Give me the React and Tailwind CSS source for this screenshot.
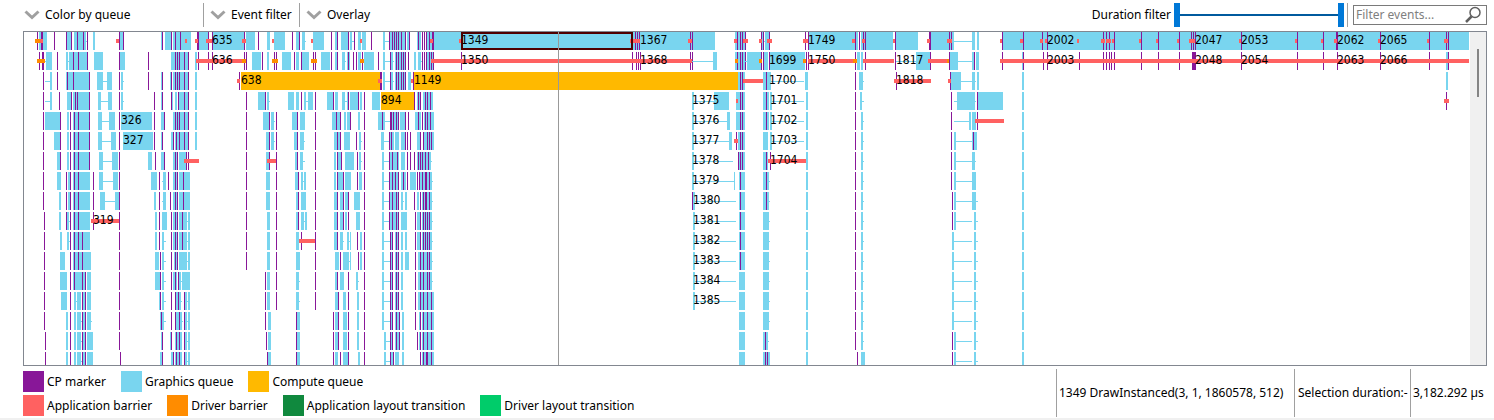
import React from "react";

/*
 * Each string is one lane of the timeline. Tokens, in pixels:
 *   b = graphics queue, c = compute queue, l = idle connector,
 *   p = CP marker, r = application barrier, o = driver barrier,
 *   t = label (x:text), s = selected event
 */
const ROWS = [
  "b39-47 p37 p41 p42 o35-40 r40-43 p54 b66-72 l67-69 p66 p71 b74-86 l86-88 p77 p83 p87 b93-95 b119-123 p119 p123 r116-119 b161-162 p162 b165-171 p171 b173-191 p175 p180 r185-187 p197 p198 b199-208 p208 r195-198 b213-244 p212 r206-212 b246-255 p244 r242-246 p258 b267-270 b274-285 r272-274 p292 b296-299 p299 b302-305 l305-306 b313-324 r311-313 p331 b335-337 p337 b341-348 p348 b350-352 l352-354 p354 b358-361 b362-366 r360-362 p371 b383-385 l385-389 b389-406 p389 p392 p394 p396 p398 p401 p405 b407-409 p409 b417-421 p418 p422 p424 p426 b427-434 p429 p432 p433 b434-461 r430-433 r459-461 b461-715 p635 p637 p639 r630-640 p690 p692 r688-692 b735-745 p737 p740 p742 p745 r734-737 r743-748 b762-764 p761 p763 r759-762 l764-765 b765-769 p769 r767-772 p805 p808 r803-808 b809-858 p855 r852-855 p859 b861-893 p863 p865 r862-865 p895 b896-918 r893-895 b931-949 p929 p930 r927-930 b950-954 p949 p951 r947-952 l954-972 b972-975 b977-979 b1003-1469 p1002 r1000-1002 p1023 r1020-1023 p1042 r1040-1043 p1047 r1045-1047 r1077-1079 p1103 p1106 p1109 p1114 r1101-1105 r1106-1108 r1108-1111 r1112-1114 p1141 r1139-1141 p1158 r1156-1158 p1179 r1177-1179 p1191 p1193 p1195 r1189-1195 p1241 r1239-1241 p1297 r1295-1297 p1323 r1321-1323 p1336 p1337 r1334-1337 p1380 r1378-1380 p1429 r1427-1429 p1446 p1448 r1444-1448 s461-633 t212:635 t461:1349 t640:1367 t808:1749 t1047:2002 t1195:2047 t1241:2053 t1337:2062 t1380:2065",
  "p39 p42 p43 o37-45 l45-46 b46-52 p57 b66-68 l68-69 b69-87 p73 p78 p87 b94-103 b120-125 p119 p148 b171-189 p175 p177 p179 p184 p188 b195-197 p198 p208 p212 r196-244 p244 p246 o242-246 b252-261 p262 b267-269 p274 p276 o272-278 b282-291 p294 b296-299 b301-309 p301 p313 p315 o311-317 b321-330 p331 b335-337 p337 b342-345 l345-346 b347-350 p348 p353 p356 b358-361 p362 b364-374 o360-364 p378 b383-385 l385-394 p390 b391-393 b395-406 p396 p398 p401 p403 p405 p408 b414-416 b418-421 l421-422 p422 p424 p426 b427-434 p429 p431 p433 p461 p632 p636 p638 p640 p690 r431-692 p692 l692-713 b713-717 b735-745 p737 p740 p742 o735-738 p745 l745-747 b747-761 p761 p763 o759-762 b764-768 p769 b770-805 o803-806 p806 p808 r808-853 p855 o853-857 b857-860 b861-863 p865 r863-894 p895 l896-916 b916-930 p930 r928-947 o947-950 p949 b950-958 l958-972 b972-975 p974 b976-979 b1022-1024 p1002 p1023 p1043 p1047 p1079 p1103 p1106 p1109 p1111 p1114 p1141 p1158 p1179 p1192 p1193 p1194 p1195 p1241 p1297 p1323 p1337 p1380 p1429 b1446-1448 p1448 r1000-1469 t212:636 t461:1350 t640:1368 t769:1699 t808:1750 t896:1817 t1047:2003 t1195:2048 t1241:2054 t1337:2063 t1380:2066",
  "p43 l45-50 b50-52 p57 b66-90 p67 p73 p89 b97-103 l103-107 b107-112 p119 b121-123 l123-124 p148 b161-162 p162 b170-171 p171 b173-189 p175 p177 p179 p184 p188 b195-197 p239 r237-240 c241-380 p380 p381 r378-382 b383-385 l385-394 p390 b391-393 b395-406 p396 p398 p401 p403 p405 b408-411 p413 r411-413 c414-738 b738-745 p740 p742 r743-763 b763-771 p766 l771-804 b805-808 p855 b859-863 l863-864 p896 r894-931 p950 r948-951 b951-961 l961-976 b972-975 b977-979 b1022-1024 b1446-1448 t241:638 t414:1149 t769:1700 t896:1818",
  "p43 l45-50 b50-52 p59 b67-71 p71 b73-90 p75 p77 p89 b98-101 l101-108 b108-112 p119 b121-123 l123-124 p154 b161-162 p162 p171 b172-173 b175-177 p178 b179-189 p184 p188 b195-197 p246 b258-265 p265 b267-269 l269-270 b288-294 b296-299 p301 b304-306 l306-308 b308-313 p315 b327-333 p333 b335-338 b342-345 l345-347 b347-349 p348 b350-359 p358 b360-362 p364 b372-380 c381-414 p414 b417-421 p418 p420 b423-433 p425 p427 p430 b692-694 l694-714 b714-729 b736-745 p740 p742 r736-738 b763-769 p766 b770-772 l772-804 b806-808 p855 b860-862 l862-864 p951 l954-957 b957-975 l975-976 p977 b978-1003 b1022-1024 p1446 r1444-1449 t381:894 t692:1375 t770:1701",
  "p43 b45-60 p60 b67-69 p70 b73-90 p74 p78 p89 b98-102 l102-109 b109-115 p119 b121-152 p154 b161-164 p164 b173-189 p175 p177 p179 p184 p188 b195-197 p246 b263-269 p269 b271-274 l274-275 p276 b292-297 p297 b300-305 p315 b332-340 p336 p340 b344-346 b347-350 p350 b358-360 p364 b378-385 p382 l385-390 p390 p391 b392-399 p393 p396 p398 b400-406 p405 p408 b415-421 p418 p422 b424-434 p425 p427 p430 b692-694 l694-727 b727-730 b736-745 p740 p742 b763-769 p766 b770-772 l772-804 b806-808 p855 b861-863 l863-864 p951 l954-969 b969-971 b972-976 p977 r975-1004 b1022-1024 t121:326 t692:1376 t770:1702",
  "p43 b54-60 p60 b67-69 p70 b73-90 p74 p78 p89 b98-102 l102-111 b111-116 p119 b123-153 p154 b161-162 p162 b171-173 p173 b175-189 p176 p179 p184 p188 b195-197 p246 b266-269 p269 b271-274 l274-275 p276 b294-298 p297 b300-304 l304-305 p315 b334-341 p337 p340 b344-350 p356 b359-361 l361-362 p364 b381-384 l384-389 p389 b390-394 p391 b395-399 b401-406 p405 p407 p410 b417-421 p420 b423-434 p423 p427 p429 p431 b692-694 l694-729 b729-732 p736 r734-738 b738-745 p740 p742 b763-768 b770-772 l772-804 b806-808 p855 b861-863 l863-864 p951 b954-956 l956-972 b972-977 p973 b1022-1024 t123:327 t692:1377 t770:1703",
  "p43 b57-60 p60 b67-69 p70 b73-90 p74 p78 p89 b99-103 l103-112 b112-118 p119 b148-152 p155 b161-164 p164 b173-178 p175 p177 b179-187 p186 p188 r184-199 p246 b266-269 p269 r267-276 p276 b295-298 p297 b300-303 l303-305 p315 b334-336 p337 b338-342 p341 b345-354 p357 b359-361 l361-362 p364 b382-384 l384-389 b389-399 p389 p392 p397 b401-405 p407 p410 p414 b417-431 p418 p420 p422 p425 p428 l431-432 b692-694 l694-733 b739-745 p738 p740 p742 b763-768 p766 p770 r768-806 b806-808 p855 b861-863 l863-864 p951 b954-956 l956-976 b972-975 b1022-1024 t692:1378 t770:1704",
  "p43 b57-61 p66 b68-70 p70 b73-90 p74 p78 p93 b99-103 l103-113 b113-118 p119 b151-157 p159 l162-163 b163-166 p168 b173-178 p175 p177 b179-190 p183 p246 b266-270 p276 b295-299 p298 b301-303 l303-304 b304-306 p315 b334-336 p337 b338-344 p343 b345-351 p357 b359-362 p364 b382-384 l384-389 b389-399 p389 p392 p395 p398 b401-406 p403 p407 b410-416 p417 p419 b420-432 p422 p425 p426 p429 l432-433 b692-694 l694-734 b734-735 b739-745 p740 b763-769 p766 l769-770 b806-808 p855 b861-863 l863-864 p951 b954-956 l956-972 b972-976 b1022-1024 t692:1379",
  "p43 b59-61 p66 b68-70 p70 b73-90 p74 p78 p93 b100-105 l105-115 b115-119 p119 b154-156 p159 l162-163 b163-166 p170 b173-178 p175 p177 b179-190 p183 p246 b266-270 p276 b296-298 p298 b301-306 p315 b334-337 p337 b340-344 p343 b345-348 p348 b354-360 p364 b382-384 l384-389 b389-399 p389 p392 p396 p398 b401-403 l403-404 b405-407 p414 b417-419 p420 b422-432 p423 p425 p426 p429 l432-433 p692 b693-695 l695-736 b739-745 p740 b763-769 p766 l769-770 b806-808 p855 b861-863 l863-864 p952 b954-956 l956-972 b972-976 l976-978 b1022-1024 t693:1380",
  "p44 b59-61 p66 b67-69 l69-70 p70 b73-90 p74 p78 p93 r91-119 p119 b155-157 p159 b162-167 p171 b173-178 p175 p177 b179-187 p182 l187-188 b188-190 p246 b267-270 p276 b296-298 p298 b301-304 l304-305 b305-307 p315 b334-337 p337 b340-344 p343 b345-347 p348 b356-360 p364 b382-384 l384-389 b389-399 p389 p392 p396 p398 b401-407 p415 b417-421 p420 b422-432 p423 p425 p427 p429 l432-433 b693-695 l695-736 b739-745 p740 b763-769 l769-770 b806-808 p855 b861-863 l863-864 p952 b954-956 l956-972 b974-976 l976-978 b1022-1024 t93:319 t693:1381",
  "p44 b60-62 b67-69 l69-70 p70 b73-90 p74 p78 p82 p119 b155-157 p159 b162-164 l164-166 p171 b173-178 p175 p177 b179-187 p182 l187-188 b188-190 p246 b267-270 p276 b296-299 p301 p315 r299-315 b334-337 p337 b340-343 l343-344 b347-349 l349-350 b350-351 p357 b360-362 p364 b382-384 l384-390 p390 b391-393 p392 b395-399 p396 p398 b401-403 b405-407 p415 b417-421 p420 b422-432 p423 p425 p427 p429 l432-433 b693-695 l695-736 b739-745 p740 b763-769 l769-770 b806-808 p855 b861-863 l863-864 b952-954 l954-972 b974-976 l976-978 b1022-1024 t693:1382",
  "p44 b60-65 p70 b73-91 p74 p78 p82 p119 b155-159 p160 b162-164 l164-166 p171 b174-178 p175 p177 b179-187 l187-188 b188-190 p246 b267-270 p276 b296-300 p315 b335-339 p340 b343-349 l349-350 b350-351 p358 b360-362 p364 b382-384 l384-390 p390 b391-393 p392 b395-399 p396 p398 b401-403 b405-409 p415 b418-432 p420 p423 p427 p429 l432-433 b693-695 l695-736 b739-745 p740 b763-769 l769-770 b806-808 p855 b861-863 l863-864 b952-954 l954-972 b974-976 l976-978 b1022-1024 t693:1383",
  "p44 b60-67 p70 b73-86 p74 p82 p85 b87-91 p119 b155-160 p160 b162-164 l164-166 p171 b173-177 p175 p178 b179-181 l181-182 b182-190 p265 b267-270 p276 b296-299 l299-300 p315 b335-337 p337 b340-344 p348 b356-358 l358-359 p364 b382-384 l384-390 p390 b391-393 p392 b395-399 p396 p398 b401-403 p415 b418-432 p420 p423 p427 p429 l432-433 b693-695 l695-736 b739-745 b763-769 l769-770 b806-808 p855 b861-863 l863-864 b952-954 l954-972 b974-976 l976-978 b1022-1024 t693:1384",
  "p44 b61-67 p70 b74-76 l76-77 b77-81 b82-86 p82 p85 b87-91 p119 b159-160 p160 b162-164 l164-166 p171 b175-181 p175 p178 l181-182 b185-187 p184 l187-188 b188-190 p265 b267-270 p276 b296-299 l299-300 p315 b335-338 p338 b343-346 p348 b357-359 p364 b382-384 l384-390 p390 b391-393 p392 b395-399 p396 p398 b401-403 p415 b418-434 p420 p423 p427 p431 b693-695 l695-736 b739-745 b763-769 l769-770 b806-808 p855 b861-863 l863-864 b952-954 l954-972 b974-976 l976-978 b1022-1024 t693:1385",
  "p44 b66-68 p70 b74-76 b77-81 l81-82 b82-86 p82 p85 b87-91 l91-92 p119 b160-164 p161 l164-166 p171 b175-182 p175 p179 l182-183 p184 b185-187 l187-188 b188-190 p265 b268-271 p296 b297-300 p333 b335-338 p338 b343-347 p348 b357-359 p364 b382-384 l384-390 p390 b391-393 p392 b395-399 p396 p399 b402-404 p415 b419-421 p420 b422-434 p423 p427 p431 b739-745 b763-769 l769-770 b806-808 p855 b861-863 l863-864 b952-954 l954-972 b974-976 l976-978 b1022-1024",
  "p45 b66-68 p70 b74-76 b77-81 l81-82 b82-86 p82 p85 b87-93 p119 b161-162 p162 b170-171 p171 b175-182 p176 p179 p184 b185-187 l187-188 b188-190 p266 b268-271 p296 b297-300 p333 b335-338 p338 b343-347 p348 b357-359 p364 b384-386 l386-390 p390 b391-393 p392 b395-399 p396 p399 b402-404 p417 b419-421 p420 b422-434 p423 p427 p431 b739-745 b763-768 p765 l768-769 b806-808 p855 b861-863 l863-864 p952 b954-956 l956-972 b974-976 l976-978 b1022-1024",
  "p45 b66-68 p70 b74-76 b77-81 l81-82 b82-86 p82 p85 b87-93 p120 b160-162 p162 b171-173 p173 b175-182 p176 p179 p184 b185-187 l187-188 b188-190 p267 b268-271 p296 b297-300 p333 b335-338 p340 b343-348 p348 b358-360 p364 b384-386 l386-390 b390-393 p390 p393 b395-399 b402-404 p420 b422-434 p423 p426 p427 p431 b739-745 b763-770 p765 p767 b806-808 p857 b861-865 p952 b954-956 l956-972 b974-976 l976-978 b1022-1024",
];

const SHAPES = {
  b: { cls: "fill-[#79d5ef]", top: 0, h: 18 },
  c: { cls: "fill-[#ffb900]", top: 0, h: 18 },
  l: { cls: "fill-[#79d5ef]", top: 9, h: 1 },
  p: { cls: "fill-[#881798]", top: 0, h: 18 },
  r: { cls: "fill-[#ff6161]", top: 7, h: 4 },
  o: { cls: "fill-[#ff8c00]", top: 7, h: 4 },
};

function Mark({ token, y }) {
  const kind = token[0];
  const body = token.slice(1);
  if (kind === "t") {
    const [x, label] = body.split(":");
    return (
      <text
        x={x}
        y={y + 12}
        className="fill-black font-['DejaVu_Sans_Condensed','DejaVu_Sans',sans-serif] text-xs"
      >
        {label}
      </text>
    );
  }
  const [x0, x1] = body.split("-").map(Number);
  const width = x1 ? x1 - x0 : 1;
  if (kind === "s") {
    return (
      <rect
        x={x0 + 1}
        y={y + 1}
        width={width - 2}
        height={16}
        className="fill-none stroke-[#500000] stroke-2"
      />
    );
  }
  const shape = SHAPES[kind];
  return <rect x={x0} y={y + shape.top} width={width} height={shape.h} className={shape.cls} />;
}

function Timeline() {
  return (
    <svg
      viewBox="24 32 1446 333"
      role="img"
      aria-label="Event timeline"
      shapeRendering="crispEdges"
      className="block h-auto min-w-0 flex-1"
    >
      {ROWS.map((row, i) => (
        <g key={i}>
          {row.split(" ").map((token, j) => (
            <Mark key={j} token={token} y={32 + i * 20} />
          ))}
        </g>
      ))}
      <rect x={558} y={32} width={1} height={333} className="fill-[#999999]" />
    </svg>
  );
}

function MenuButton({ children }) {
  return (
    <button type="button" className="flex items-center gap-[5px]">
      <svg viewBox="0 0 16 12" className="h-3 w-4 fill-none stroke-[#a0a0a0] stroke-3">
        <path d="M1.5 2.5 L8 8.5 L14.5 2.5" />
      </svg>
      <span>{children}</span>
    </button>
  );
}

const THUMB =
  "pointer-events-none absolute inset-0 m-0 h-full w-full appearance-none bg-transparent [&::-webkit-slider-thumb]:pointer-events-auto [&::-webkit-slider-thumb]:h-6 [&::-webkit-slider-thumb]:w-1.5 [&::-webkit-slider-thumb]:appearance-none [&::-webkit-slider-thumb]:bg-[#0078d7]";

function Toolbar() {
  return (
    <header className="flex h-[31px] items-start justify-between pt-[3px] pr-[7px] pl-6">
      <div className="flex items-center">
        <div className="flex h-6 w-[180px] items-center border-r border-[#a0a0a0]">
          <MenuButton>Color by queue</MenuButton>
        </div>
        <div className="flex h-6 w-24 items-center border-r border-[#a0a0a0] pl-1.5">
          <MenuButton>Event filter</MenuButton>
        </div>
        <div className="flex h-6 items-center pl-1.5">
          <MenuButton>Overlay</MenuButton>
        </div>
      </div>
      <div className="flex items-center">
        <span id="duration-label" className="pr-[3px]">
          Duration filter
        </span>
        <div
          role="group"
          aria-labelledby="duration-label"
          className="relative flex h-6 w-[170px] items-center"
        >
          <div className="h-0.5 w-full bg-[#005a9e]" />
          <input type="range" aria-label="Minimum duration" defaultValue={0} className={THUMB} />
          <input type="range" aria-label="Maximum duration" defaultValue={100} className={THUMB} />
        </div>
        <div className="ml-[3px] flex h-6 items-center border-l border-[#a0a0a0] pl-[5px]">
          <label className="flex h-5 w-[134px] items-center border border-[#7a7a7a] bg-white pr-1 pl-0.5">
            <input
              type="text"
              aria-label="Filter events"
              placeholder="Filter events..."
              className="min-w-0 flex-1 outline-none placeholder:text-[#808080]"
            />
            <svg viewBox="0 0 18 18" className="size-[18px] fill-none stroke-[#606060]">
              <circle cx="11" cy="6.5" r="5" className="stroke-[1.5]" />
              <path d="M7.5 10.5 L2 16" className="stroke-[2.5]" />
            </svg>
          </label>
        </div>
      </div>
    </header>
  );
}

function Swatch({ color, children }) {
  return (
    <li className="flex items-center gap-[3px]">
      <span className={"size-[21px] " + color} />
      <span>{children}</span>
    </li>
  );
}

function Footer() {
  return (
    <footer className="flex justify-between pl-[23px]">
      <div className="flex flex-col gap-[3px] pt-[5px]">
        <ul className="flex gap-[15px]">
          <Swatch color="bg-[#881798]">CP marker</Swatch>
          <Swatch color="bg-[#79d5ef]">Graphics queue</Swatch>
          <Swatch color="bg-[#ffb900]">Compute queue</Swatch>
        </ul>
        <ul className="flex gap-[15px]">
          <Swatch color="bg-[#ff6161]">Application barrier</Swatch>
          <Swatch color="bg-[#ff8c00]">Driver barrier</Swatch>
          <Swatch color="bg-[#10893e]">Application layout transition</Swatch>
          <Swatch color="bg-[#00cc6a]">Driver layout transition</Swatch>
        </ul>
      </div>
      <div className="mt-[3px] flex h-12 items-center pr-[7px]">
        <div className="flex h-full min-w-[238px] items-center border-l border-[#a0a0a0] pl-0.5">
          1349 DrawInstanced(3, 1, 1860578, 512)
        </div>
        <div className="flex h-full min-w-[116px] items-center border-l border-[#a0a0a0] pl-[3px]">
          Selection duration:-
        </div>
        <div className="flex h-full min-w-[77px] items-center border-l border-[#a0a0a0] pl-0.5">
          3,182.292 µs
        </div>
      </div>
    </footer>
  );
}

export default function App() {
  return (
    <div className="min-h-screen bg-[#f0f0f0] font-['Noto_Sans',sans-serif] text-xs whitespace-nowrap text-black">
      <div className="bg-white pb-px">
        <Toolbar />
        <main className="mr-[7px] ml-[23px] flex border border-[#828790]">
          <Timeline />
          <div className="flex w-4 justify-center bg-[#f0f0f0] pt-[17px]">
            <div className="h-12 w-0.5 bg-[#858585]" />
          </div>
        </main>
        <Footer />
      </div>
    </div>
  );
}
